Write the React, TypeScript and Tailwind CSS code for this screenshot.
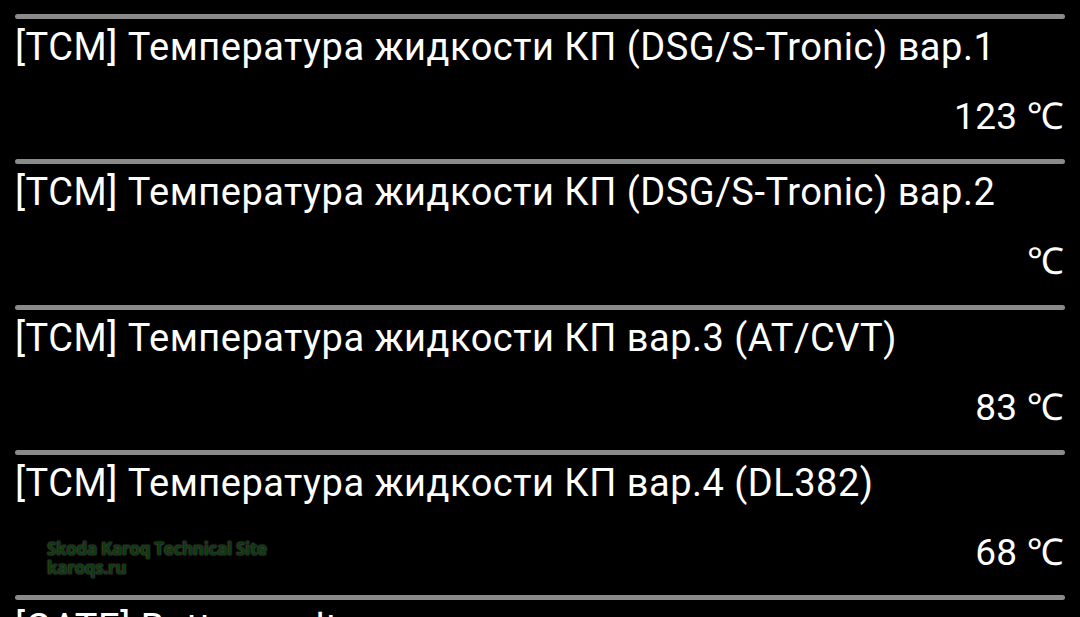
import React from "react";

const rows = [
  { title: "[TCM] Температура жидкости КП (DSG/S-Tronic) вар.1", value: "123 ℃" },
  { title: "[TCM] Температура жидкости КП (DSG/S-Tronic) вар.2", value: "℃" },
  { title: "[TCM] Температура жидкости КП вар.3 (AT/CVT)", value: "83 ℃" },
  { title: "[TCM] Температура жидкости КП вар.4 (DL382)", value: "68 ℃" },
];

function Row({ title, value }: { title: string; value: string }) {
  return (
    <div className="h-[145.25px] flex flex-col">
      <div className="mx-[15px] h-[5px] rounded-full bg-[#8a8a8a]" />
      <div className="pl-[15px] pt-[6px] text-[38px] leading-[44px] tracking-[0.5px] text-white whitespace-nowrap">{title}</div>
      <div className="pr-[16px] pt-[26px] text-right text-[37px] leading-[44px] tracking-[0.3px] text-white">{value}</div>
    </div>
  );
}

export default function App() {
  return (
    <div
      className="relative w-[1080px] h-[617px] overflow-hidden bg-black pt-[14px]"
      style={{ fontFamily: "Roboto, 'Noto Sans', sans-serif" }}
    >
      {rows.map((r, i) => (
        <Row key={i} title={r.title} value={r.value} />
      ))}
      <div className="mx-[15px] h-[5px] rounded-full bg-[#8a8a8a]" />
      <div className="pl-[15px] pt-[6px] text-[38px] leading-[44px] tracking-[0.5px] text-white whitespace-nowrap">[GATE] Battery voltage</div>
      <div
        className="absolute left-[47px] top-[539px] text-[17px] leading-[19px] font-bold tracking-[-0.3px] text-[#0b3a0b] [text-shadow:0_0_2px_#444,0_0_2px_#444,0_0_1px_#444]"
        style={{ fontFamily: "'Open Sans', sans-serif" }}
      >
        <div>Skoda Karoq Technical Site</div>
        <div>karoqs.ru</div>
      </div>
    </div>
  );
}
